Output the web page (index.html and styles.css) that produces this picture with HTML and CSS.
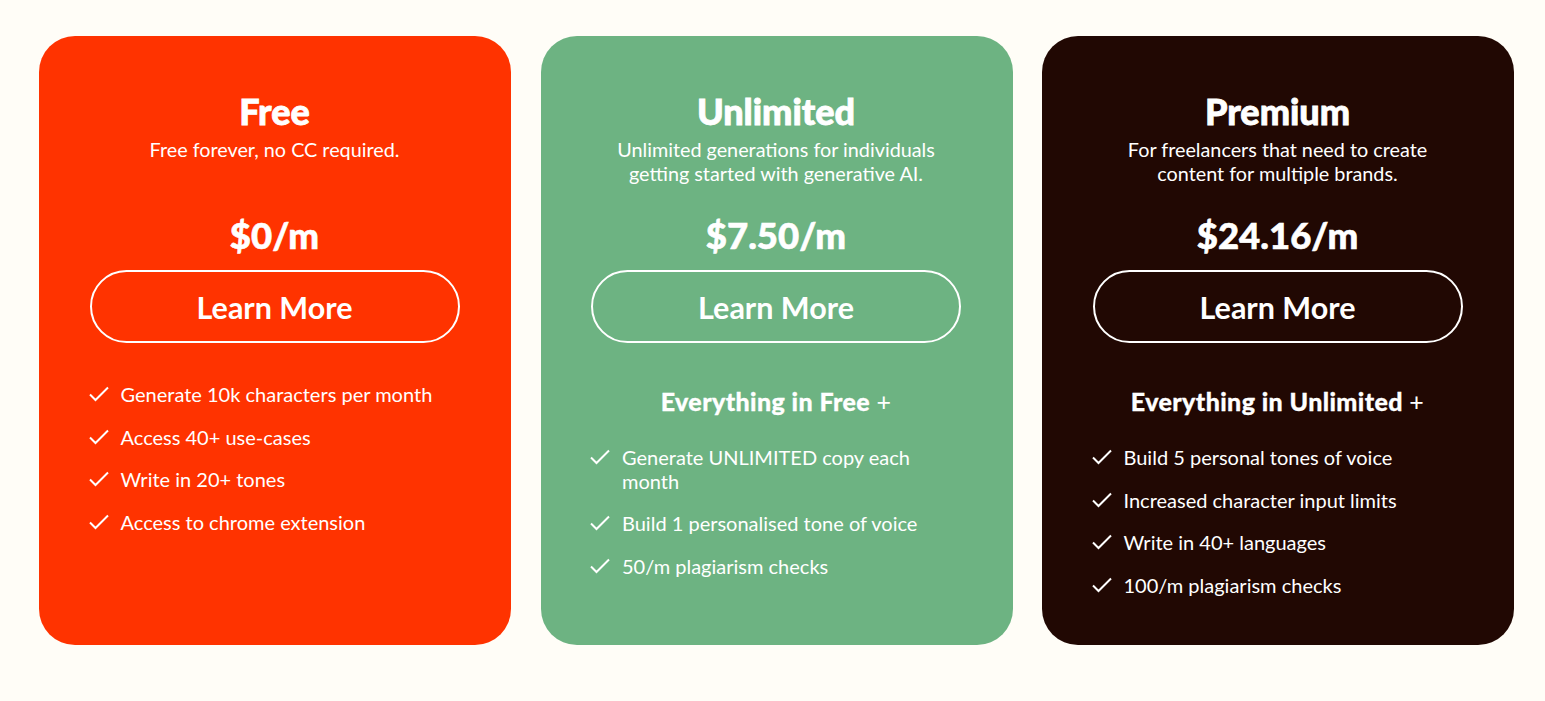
FILE: index.html
```html
<!DOCTYPE html>
<html lang="en">
<head>
<meta charset="utf-8">
<title>Pricing</title>
<link rel="stylesheet" href="styles.css">
</head>
<body>
<main class="plans">
  <section class="card card-free">
    <h2 class="plan-name">Free</h2>
    <p class="plan-desc">Free forever, no CC required.</p>
    <div class="price">$0/m</div>
    <a class="btn" href="#">Learn More</a>
    <ul class="features features-first">
      <li><svg class="check" viewBox="0 0 20 16"><polyline points="1,8.5 6.5,14 19,1.5"/></svg><span>Generate 10k characters per month</span></li>
      <li><svg class="check" viewBox="0 0 20 16"><polyline points="1,8.5 6.5,14 19,1.5"/></svg><span>Access 40+ use-cases</span></li>
      <li><svg class="check" viewBox="0 0 20 16"><polyline points="1,8.5 6.5,14 19,1.5"/></svg><span>Write in 20+ tones</span></li>
      <li><svg class="check" viewBox="0 0 20 16"><polyline points="1,8.5 6.5,14 19,1.5"/></svg><span>Access to chrome extension</span></li>
    </ul>
  </section>
  <section class="card card-unlimited">
    <h2 class="plan-name">Unlimited</h2>
    <p class="plan-desc">Unlimited generations for individuals getting started with generative AI.</p>
    <div class="price">$7.50/m</div>
    <a class="btn" href="#">Learn More</a>
    <h3 class="includes">Everything in Free <span class="plus">+</span></h3>
    <ul class="features">
      <li><svg class="check" viewBox="0 0 20 16"><polyline points="1,8.5 6.5,14 19,1.5"/></svg><span>Generate UNLIMITED copy each month</span></li>
      <li><svg class="check" viewBox="0 0 20 16"><polyline points="1,8.5 6.5,14 19,1.5"/></svg><span>Build 1 personalised tone of voice</span></li>
      <li><svg class="check" viewBox="0 0 20 16"><polyline points="1,8.5 6.5,14 19,1.5"/></svg><span>50/m plagiarism checks</span></li>
    </ul>
  </section>
  <section class="card card-premium">
    <h2 class="plan-name">Premium</h2>
    <p class="plan-desc">For freelancers that need to create content for multiple brands.</p>
    <div class="price">$24.16/m</div>
    <a class="btn" href="#">Learn More</a>
    <h3 class="includes">Everything in Unlimited <span class="plus">+</span></h3>
    <ul class="features">
      <li><svg class="check" viewBox="0 0 20 16"><polyline points="1,8.5 6.5,14 19,1.5"/></svg><span>Build 5 personal tones of voice</span></li>
      <li><svg class="check" viewBox="0 0 20 16"><polyline points="1,8.5 6.5,14 19,1.5"/></svg><span>Increased character input limits</span></li>
      <li><svg class="check" viewBox="0 0 20 16"><polyline points="1,8.5 6.5,14 19,1.5"/></svg><span>Write in 40+ languages</span></li>
      <li><svg class="check" viewBox="0 0 20 16"><polyline points="1,8.5 6.5,14 19,1.5"/></svg><span>100/m plagiarism checks</span></li>
    </ul>
  </section>
</main>
</body>
</html>
```
FILE: styles.css
```css
* { box-sizing: border-box; }

html, body {
  margin: 0;
  background: #fffdf7;
}

body {
  font-family: Lato, "Noto Sans", sans-serif;
  color: #ffffff;
  padding: 36px 31px 0 39px;
}

.plans {
  display: grid;
  grid-template-columns: repeat(3, 472px);
  gap: 29.5px;
}

.card {
  height: 609px;
  border-radius: 36px;
  padding: 53px 51px 0 50px;
  display: flex;
  flex-direction: column;
  align-items: center;
}

.card-free { background: #ff3300; }
.card-unlimited { background: #6db382; }
.card-premium { background: #210803; }

.plan-name {
  margin: 0;
  font-size: 36px;
  line-height: 44px;
  font-weight: 900;
  -webkit-text-stroke: 0.8px #ffffff;
}

.plan-desc {
  margin: 4px 0 0;
  font-size: 19.8px;
  line-height: 24px;
  height: 48px;
  max-width: 350px;
  text-align: center;
}

.price {
  margin-top: 29px;
  font-size: 36.5px;
  line-height: 42px;
  font-weight: 900;
  -webkit-text-stroke: 0.6px #ffffff;
}

.btn {
  margin-top: 14px;
  width: 370px;
  height: 73px;
  border: 2px solid #ffffff;
  border-radius: 40px;
  display: flex;
  align-items: center;
  justify-content: center;
  color: #ffffff;
  text-decoration: none;
  font-size: 30.5px;
  font-weight: 700;
}

.includes {
  margin: 43px 0 0;
  font-size: 25px;
  line-height: 30px;
  font-weight: 900;
  letter-spacing: 0.4px;
  -webkit-text-stroke: 0.3px #ffffff;
}

.plus { font-weight: 400; -webkit-text-stroke: 0; }

.features {
  list-style: none;
  margin: 30px 0 0;
  padding: 0;
  width: 370px;
  display: flex;
  flex-direction: column;
  gap: 19px;
}

.features-first { margin-top: 40px; }

.features li {
  display: flex;
  align-items: flex-start;
  font-size: 20px;
  line-height: 23.5px;
}

.check {
  flex: none;
  width: 20px;
  height: 16px;
  margin: 3px 12px 0 -1px;
  fill: none;
  stroke: #ffffff;
  stroke-width: 2;
}
```
